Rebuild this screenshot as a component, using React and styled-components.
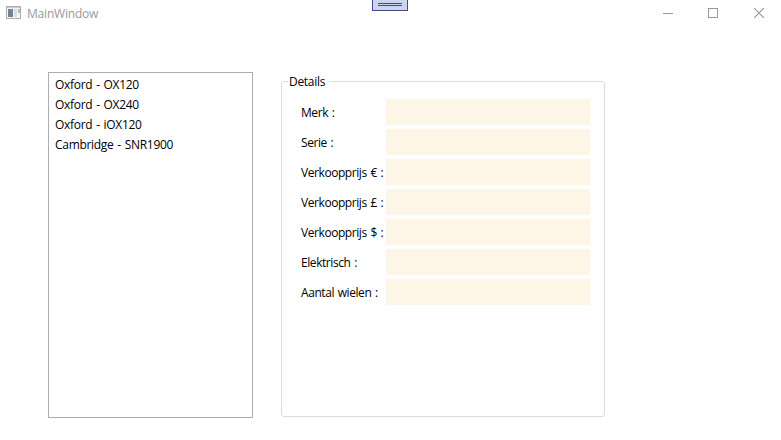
import React from "react";
import styled, { createGlobalStyle } from "styled-components";

const GlobalStyle = createGlobalStyle`
  * { box-sizing: border-box; }
  body { margin: 0; background: #fff; overflow: hidden; }
`;

const Window = styled.main`
  width: 781px;
  height: 440px;
  background: #fff;
  color: #000;
  font: 12px/16px "Open Sans", "Noto Sans", sans-serif;
  white-space: nowrap;
`;

const TitleBar = styled.header`
  position: relative;
  display: flex;
  align-items: center;
  height: 26px;
  padding-left: 6px;
`;

const Title = styled.span`
  flex: 1;
  margin-left: 5px;
  padding-top: 1px;
  color: #999;
  letter-spacing: -0.2px;
`;

const Caption = styled.button`
  display: flex;
  align-items: center;
  justify-content: center;
  width: ${(p) => p.$width}px;
  height: 26px;
  padding: 0;
  border: 0;
  background: none;
  color: #949c9a;
`;

const DebugTab = styled.div`
  position: absolute;
  top: 0;
  left: 372px;
  width: 36px;
  height: 11px;
  padding: 3px 5px 0;
  border: 1px solid #434a86;
  border-top: 0;
  background: #ccd5f0;
`;

const Grip = styled.div`
  height: 3px;
  border: solid #434a86;
  border-width: 1px 0;
`;

const Content = styled.div`
  display: flex;
  align-items: flex-start;
  gap: 28px;
  padding: 46px 0 0 48px;
`;

const ListBox = styled.ul`
  width: 205px;
  height: 346px;
  margin: 0;
  padding: 2px 6px;
  border: 1px solid #abadb3;
  list-style: none;
`;

const ListItem = styled.li`
  height: 20px;
  line-height: 20px;
  letter-spacing: -0.3px;
  word-spacing: 1px;
`;

const GroupBox = styled.section`
  width: 324px;
  height: 336px;
  margin-top: 9px;
  border: 1px solid #d5dfe5;
  border-radius: 3px;
`;

const GroupTitle = styled.h2`
  width: 41px;
  height: 16px;
  margin: -8px 0 0 6px;
  padding-left: 1px;
  background: #fff;
  font-size: 12px;
  font-weight: 400;
  letter-spacing: -0.3px;
`;

const Form = styled.div`
  display: grid;
  gap: 4px;
  padding: 9px 14px 0 19px;
`;

const FormRow = styled.div`
  display: grid;
  grid-template-columns: 85px 204px;
  grid-template-rows: 26px;
`;

const Label = styled.span`
  line-height: 27px;
  letter-spacing: -0.43px;
  word-spacing: 1px;
`;

const Field = styled.div`
  background: #fdf5e6;
`;

const bikes = ["Oxford - OX120", "Oxford - OX240", "Oxford - iOX120", "Cambridge - SNR1900"];

const fields = [
  "Merk :",
  "Serie :",
  "Verkoopprijs € :",
  "Verkoopprijs £ :",
  "Verkoopprijs $ :",
  "Elektrisch :",
  "Aantal wielen :",
];

const AppIcon = () => (
  <svg width="16" height="14" viewBox="0 0 16 14" shapeRendering="crispEdges">
    <rect x="0.5" y="0.5" width="14" height="12" fill="#f5f3f5" stroke="#b5a9ae" />
    <rect x="1" y="1" width="13" height="1" fill="#cfc8cf" />
    <rect x="2" y="3" width="5" height="8" fill="#738392" />
    <rect x="8" y="3" width="3" height="8" fill="#d3dfe3" />
    <rect x="12" y="3" width="2" height="4" fill="#bab6c1" />
  </svg>
);

export default function App() {
  return (
    <Window>
      <GlobalStyle />
      <TitleBar>
        <AppIcon />
        <Title>MainWindow</Title>
        <Caption $width={42} aria-label="Minimize">
          <svg width="10" height="10" shapeRendering="crispEdges">
            <path d="M0 5.5H10" stroke="currentColor" />
          </svg>
        </Caption>
        <Caption $width={48} aria-label="Maximize">
          <svg width="10" height="10" shapeRendering="crispEdges">
            <path d="M.5 .5H9.5V9.5H.5Z" fill="none" stroke="currentColor" />
          </svg>
        </Caption>
        <Caption $width={44} aria-label="Close">
          <svg width="10" height="10">
            <path d="M0 0L10 10M10 0L0 10" stroke="currentColor" strokeWidth="1.2" />
          </svg>
        </Caption>
        <DebugTab>
          <Grip />
        </DebugTab>
      </TitleBar>
      <Content>
        <ListBox>
          {bikes.map((name) => (
            <ListItem key={name}>{name}</ListItem>
          ))}
        </ListBox>
        <GroupBox>
          <GroupTitle>Details</GroupTitle>
          <Form>
            {fields.map((name) => (
              <FormRow key={name}>
                <Label>{name}</Label>
                <Field />
              </FormRow>
            ))}
          </Form>
        </GroupBox>
      </Content>
    </Window>
  );
}
